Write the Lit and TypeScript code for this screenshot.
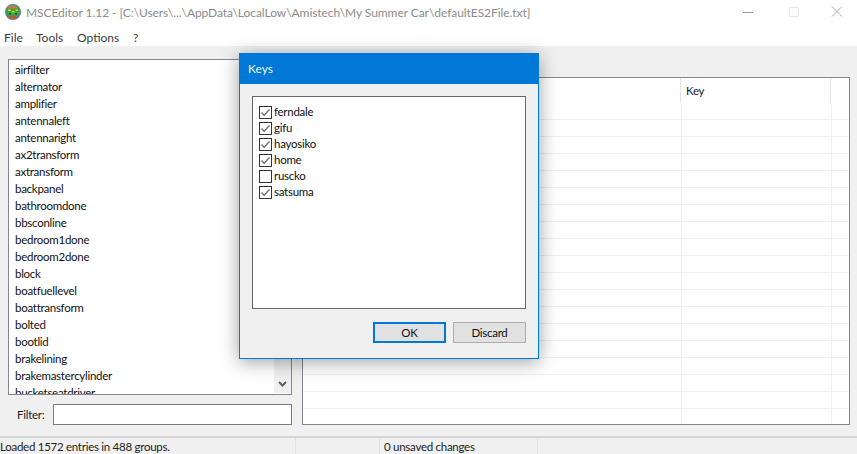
import { LitElement, html, css, svg } from "lit";
import { customElement } from "lit/decorators.js";

const ITEMS = ["airfilter","alternator","amplifier","antennaleft","antennaright","ax2transform","axtransform","backpanel","bathroomdone","bbsconline","bedroom1done","bedroom2done","block","boatfuellevel","boattransform","bolted","bootlid","brakelining","brakemastercylinder","bucketseatdriver"];
const KEYS: [string, boolean][] = [["ferndale",true],["gifu",true],["hayosiko",true],["home",true],["ruscko",false],["satsuma",true]];

@customElement("app-root")
export class AppRoot extends LitElement {
  static styles = css`
    :host { display: block; width: 857px; height: 454px; overflow: hidden; position: relative;
      font: 12px/16px Lato, "Noto Sans", sans-serif; color: #000; background: #f0f0f0; }
    .app { display: flex; flex-direction: column; height: 454px; }
    .title { height: 30px; box-sizing: border-box; background: #fff; display: flex; align-items: flex-start; padding: 4px 0 0 5px; color: #8c8c8c; flex: none; }
    .title svg.logo { width: 16px; height: 16px; margin-right: 5px; flex: none; }
    .title .txt { flex: 1; white-space: nowrap; margin-top: 1px; letter-spacing: -0.06px; }
    .ctl { width: 46px; display: flex; justify-content: center; flex: none; }
    .ctl:last-child { width: 40px; }
    .ctl svg { width: 12px; height: 12px; display: block; }
    .ctls { display: flex; margin-top: 1px; }
    .menu { height: 16px; background: #fff; display: flex; flex: none; padding-left: 4px; color: #3c3c3c; }
    .menu span:nth-child(1) { width: 32px; }
    .menu span:nth-child(2) { width: 41px; }
    .menu span:nth-child(3) { width: 56px; }
    .main { flex: 1; display: grid; grid-template-columns: 284px 548px; column-gap: 10px; padding: 13px 7px 11px 8px; min-height: 0; font-size: 11.5px; letter-spacing: -0.27px; }
    .left { display: flex; flex-direction: column; min-height: 0; }
    .list { height: 336px; box-sizing: border-box; border: 1px solid #828790; background: #fff; overflow: hidden; position: relative; flex: none; padding-top: 1px; }
    .list .row { height: 17px; line-height: 17px; padding-left: 6px; white-space: nowrap; color: #111; }
    .sb { position: absolute; right: 0; top: 0; bottom: 1px; width: 17px; background: #f0f0f0; display: flex; align-items: flex-end; justify-content: center; }
    .sb svg { width: 9px; height: 7px; margin-bottom: 5px; }
    .filter { display: flex; align-items: center; margin-top: 9px; height: 21px; padding-left: 9px; color: #222; }
    .filter label { width: 36px; flex: none; }
    .filter .inp { flex: 1; height: 21px; box-sizing: border-box; border: 1px solid #7a7a7a; background: #fff; }
    .table { margin-top: 18px; height: 348px; box-sizing: border-box; border: 1px solid #828790; background: #fff; overflow: hidden; }
    .hdr { height: 24px; display: grid; grid-template-columns: 378px 150px 18px; margin-bottom: 1px; }
    .hdr div { border-right: 1px solid #e4e4e4; line-height: 25px; padding-left: 5px; box-sizing: border-box; color: #1a1a2a; }
    .hdr div:first-child { padding: 0; }
    .hdr div:last-child { border: 0; }
    .trow { height: 17px; box-sizing: border-box; display: grid; grid-template-columns: 379px 150px 17px; border-bottom: 1px solid #f0f0f0; }
    .trow div { border-right: 1px solid #f0f0f0; box-sizing: border-box; }
    .trow div:last-child { border: 0; }
    .status { height: 18px; flex: none; border-top: 2px solid #d4d4d4; display: grid; grid-template-columns: 295px 84px 158px 1fr; box-sizing: border-box; color: #222; font-size: 11.5px; letter-spacing: -0.27px; }
    .status div { border-left: 1px solid #e2e2e2; padding-left: 4px; white-space: nowrap; box-sizing: border-box; line-height: 17px; }
    .status div:first-child { border: 0; padding: 0; }
    .dialog { position: absolute; left: 239px; top: 53px; width: 300px; height: 306px; box-sizing: border-box; border: 1px solid #0078d7; background: #f0f0f0; box-shadow: 0 3px 18px rgba(0,0,0,.38); display: flex; flex-direction: column; }
    .dhead { height: 30px; flex: none; background: #0078d7; color: #eef6fc; padding-left: 8px; line-height: 30px; }
    .dbody { flex: 1; padding: 12px 12px 15px 12px; display: flex; flex-direction: column; font-size: 11.5px; letter-spacing: -0.27px; }
    .klist { height: 213px; box-sizing: border-box; border: 1px solid #686868; background: #fff; padding: 7px 6px; flex: none; }
    .k { display: flex; align-items: center; height: 16px; color: #111; }
    .k svg { width: 13px; height: 13px; margin-right: 2px; flex: none; }
    .btns { display: flex; justify-content: flex-end; gap: 7px; margin-top: 13px; }
    .btn { width: 73px; height: 21px; box-sizing: border-box; border: 1px solid #adadad; background: #e1e1e1; text-align: center; line-height: 19px; color: #111; }
    .btn.def { border: 2px solid #0078d7; line-height: 17px; }
  `;

  private check(on: boolean) {
    return html`<svg viewBox="0 0 13 13">
      <rect x=".5" y=".5" width="12" height="12" fill="#fff" stroke="#333"/>
      ${on ? svg`<path d="M2.5 6.5 L5.2 9.2 L10.5 3.4" fill="none" stroke="#6a6a6a" stroke-width="1.3"/>` : ""}
    </svg>`;
  }

  render() {
    return html`
      <div class="app">
        <div class="title">
          <svg class="logo" viewBox="0 0 16 16">
            <circle cx="8" cy="8" r="8" fill="#4a86a8"/>
            <path d="M2 4 A8 8 0 0 1 14 4 L8 6Z" fill="#c8803c"/>
            <path d="M2.500 13 A8 8 0 0 0 13.500 13 L8 11Z" fill="#b4602c"/>
            <rect x="1" y="4.500" width="14" height="7" rx="2" fill="#3fa23a"/>
            <path d="M3 5.500h3v1.500H3zM7 7h2.500v1.500H7zM10.500 5.500H13V7h-2.500z" fill="#c4d83c"/>
            <path d="M4 9h2v1.500H4zM10 9h2v1.500h-2z" fill="#23501e"/>
          </svg>
          <span class="txt">MSCEditor 1.12 - [C:\\Users\\...\\AppData\\LocalLow\\Amistech\\My Summer Car\\defaultES2File.txt]</span>
          <div class="ctls">
            <div class="ctl"><svg viewBox="0 0 12 12"><path d="M1 7.500h10" stroke="#999" /></svg></div>
            <div class="ctl"><svg viewBox="0 0 12 12"><rect x="1.500" y="2.500" width="9" height="9" fill="none" stroke="#e6e6e6"/></svg></div>
            <div class="ctl"><svg viewBox="0 0 12 12"><path d="M1 1.500l10 10M11 1.500l-10 10" stroke="#aaa" fill="none"/></svg></div>
          </div>
        </div>
        <div class="menu"><span>File</span><span>Tools</span><span>Options</span><span>?</span></div>
        <div class="main">
          <div class="left">
            <div class="list">
              ${ITEMS.map((i) => html`<div class="row">${i}</div>`)}
              <div class="sb"><svg viewBox="0 0 9 7"><path d="M1 1l3.500 3.500L8 1" fill="none" stroke="#606060" stroke-width="2"/></svg></div>
            </div>
            <div class="filter"><label>Filter:</label><div class="inp"></div></div>
          </div>
          <div class="table">
            <div class="hdr"><div></div><div>Key</div><div></div></div>
            ${Array.from({ length: 19 }, () => html`<div class="trow"><div></div><div></div><div></div></div>`)}
          </div>
        </div>
        <div class="status">
          <div>Loaded 1572 entries in 488 groups.</div><div></div><div>0 unsaved changes</div><div></div>
        </div>
      </div>
      <div class="dialog">
        <div class="dhead">Keys</div>
        <div class="dbody">
          <div class="klist">
            ${KEYS.map(([n, on]) => html`<div class="k">${this.check(on)}<span>${n}</span></div>`)}
          </div>
          <div class="btns"><div class="btn def">OK</div><div class="btn">Discard</div></div>
        </div>
      </div>`;
  }
}
